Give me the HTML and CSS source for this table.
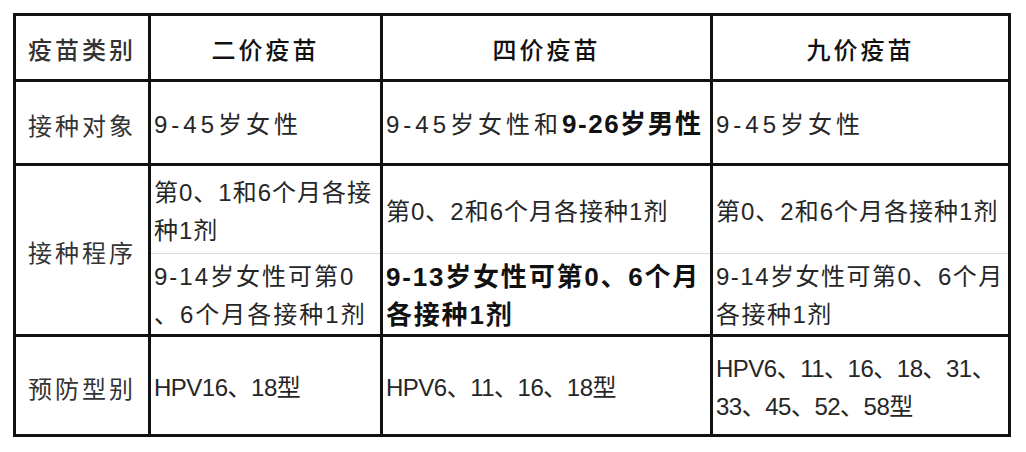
FILE: index.html
```html
<!DOCTYPE html>
<html lang="zh-CN">
<head>
<meta charset="utf-8">
<title>HPV疫苗对比</title>
<link rel="stylesheet" href="styles.css">
</head>
<body>
<table class="hpv">
  <colgroup>
    <col class="c-label">
    <col class="c-two">
    <col class="c-four">
    <col class="c-nine">
  </colgroup>
  <tr class="r-head">
    <th class="label">疫苗类别</th>
    <th>二价疫苗</th>
    <th>四价疫苗</th>
    <th>九价疫苗</th>
  </tr>
  <tr class="r-target">
    <td class="label">接种对象</td>
    <td class="wide">9-45岁女性</td>
    <td class="wide">9-45岁女性和<b>9-26岁男性</b></td>
    <td class="wide">9-45岁女性</td>
  </tr>
  <tr class="r-sub1">
    <td class="label" rowspan="2">接种程序</td>
    <td class="sub1 tight">第0、1和6个月各接<br>种1剂</td>
    <td class="sub1 tight">第0、2和6个月各接种1剂</td>
    <td class="sub1 tight">第0、2和6个月各接种1剂</td>
  </tr>
  <tr class="r-sub2">
    <td class="mid">9-14岁女性可第0<br>、6个月各接种1剂</td>
    <td class="strong">9-13岁女性可第0、6个月<br>各接种1剂</td>
    <td class="mid narrow">9-14岁女性可第0、6个月<br>各接种1剂</td>
  </tr>
  <tr class="r-types">
    <td class="label">预防型别</td>
    <td class="plain">HPV16、18型</td>
    <td class="plain">HPV6、11、16、18型</td>
    <td class="plain">HPV6、11、16、18、31、<br>33、45、52、58型</td>
  </tr>
</table>
</body>
</html>
```

FILE: styles.css
```css
html, body {
  margin: 0;
  padding: 0;
  background: #ffffff;
}

body {
  padding: 13px 0 0 13px;
}

.hpv {
  border-collapse: collapse;
  table-layout: fixed;
  width: 998px;
  border: 3px solid #111;
  font-family: "Liberation Sans", "Noto Sans CJK SC", sans-serif;
  font-size: 24px;
  color: #262626;
}

.c-label { width: 135px; }
.c-two { width: 232px; }
.c-four { width: 330px; }
.c-nine { width: 298px; }

.hpv th,
.hpv td {
  border: 3px solid #111;
  padding: 4px 3px 0;
  vertical-align: middle;
  text-align: left;
  white-space: nowrap;
  line-height: 38px;
  font-weight: 400;
}

.hpv th {
  text-align: center;
  color: #111;
  letter-spacing: 3px;
  font-family: "Noto Sans CJK SC", sans-serif;
  font-weight: 500;
  padding-top: 2px;
}

.hpv .label {
  text-align: center;
  color: #333;
  letter-spacing: 3px;
  font-family: "Noto Sans CJK SC", sans-serif;
}

.r-head { height: 66px; }
.r-target { height: 84px; }
.r-sub1 { height: 89px; }
.r-sub2 { height: 80px; }
.r-types { height: 100px; }

.hpv td.sub1 {
  border-bottom: 1px solid #dcdcdc;
}

.hpv .r-sub2 td {
  border-top: 1px solid #dcdcdc;
}

.wide { letter-spacing: 4px; }
.tight { letter-spacing: 1px; }
.mid { letter-spacing: 2px; }
.mid.narrow { letter-spacing: 1.5px; }
.plain { letter-spacing: -0.5px; }

.wide b,
.strong {
  font-family: "Liberation Sans", "Noto Sans CJK SC", sans-serif;
  font-weight: 700;
  font-size: 26px;
  color: #111;
  letter-spacing: 1.8px;
}

.wide b {
  letter-spacing: 1.5px;
}

.hpv td.strong {
  font-weight: 700;
}
```
